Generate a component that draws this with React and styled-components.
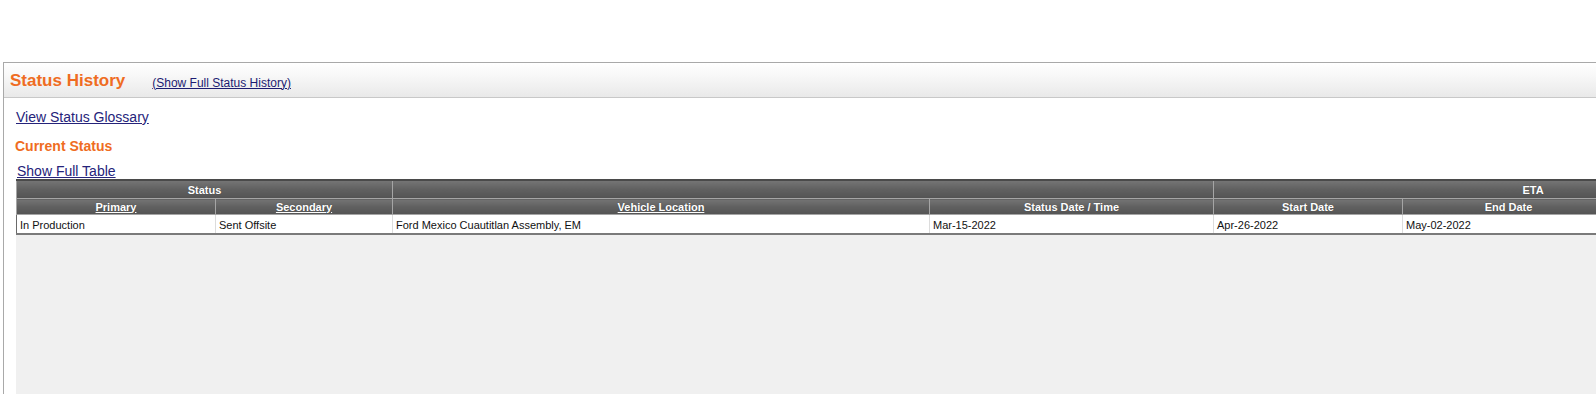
import React from "react";
import styled, { createGlobalStyle } from "styled-components";

const GlobalStyle = createGlobalStyle`
  html, body {
    margin: 0;
    padding: 0;
    background: #ffffff;
    overflow: hidden;
    font-family: Arial, "Liberation Sans", sans-serif;
  }
`;

const Page = styled.div`
  width: 1596px;
  height: 394px;
  overflow: hidden;
  padding-top: 62px;
  box-sizing: border-box;
`;

const Panel = styled.div`
  margin-left: 3px;
  width: 1900px;
  height: 340px;
  border: 1px solid #a9a9a9;
  background: #ffffff;
  display: flex;
  flex-direction: column;
`;

const PanelHeader = styled.div`
  height: 35px;
  box-sizing: border-box;
  padding: 2px 0 0 6px;
  display: flex;
  align-items: center;
  background: linear-gradient(to bottom, #ffffff 0%, #f7f7f7 40%, #e9e9e9 100%);
  border-bottom: 1px solid #c8c8c8;
`;

const Title = styled.span`
  color: #ef6c22;
  font-size: 17px;
  font-weight: bold;
`;

const HeaderLink = styled.a`
  margin-left: 27px;
  margin-top: 3px;
  color: #1c1c72;
  font-size: 12px;
  text-decoration: underline;
  cursor: pointer;
`;

const Body = styled.div`
  flex: 1;
  display: flex;
  flex-direction: column;
  padding-left: 12px;
`;

const TextLink = styled.a`
  display: block;
  color: #25237a;
  font-size: 14px;
  line-height: 16px;
  text-decoration: underline;
  margin-left: ${(p) => p.$indent || 0}px;
  cursor: pointer;
`;

const SectionTitle = styled.div`
  color: #ef6c22;
  font-size: 14px;
  font-weight: bold;
  line-height: 16px;
  margin-left: -1px;
`;

const TableArea = styled.div`
  flex: 1;
  background: #f0f0f0;
`;

const Table = styled.table`
  table-layout: fixed;
  border-collapse: collapse;
  width: 1836px;
  background: #ffffff;
  border-top: 2px solid #4a4a4a;
  border-bottom: 2px solid #7a7a7a;
  border-left: 1px solid #6a6a6a;
`;

const Th = styled.th`
  height: ${(p) => p.$h}px;
  padding: 0;
  background: linear-gradient(to bottom, #747474 0%, #606060 50%, #545454 100%);
  border: 1px solid #a5a5a5;
  border-top-color: ${(p) => (p.$first ? "#4a4a4a" : "#a5a5a5")};
  color: #ffffff;
  font-size: 11px;
  font-weight: bold;
  text-align: center;
  text-decoration: ${(p) => (p.$link ? "underline" : "none")};
  text-shadow: 0 0 1px rgba(0, 0, 0, 0.4);
  white-space: nowrap;
`;

const Td = styled.td`
  height: 17px;
  padding: 1px 0 0 3px;
  border-right: 1px solid #dcdcdc;
  color: #111111;
  font-size: 11px;
  white-space: nowrap;
  overflow: hidden;
`;

const widths = [199, 177, 537, 284, 189, 212, 238];

const row = {
  primary: "In Production",
  secondary: "Sent Offsite",
  location: "Ford Mexico Cuautitlan Assembly, EM",
  statusDate: "Mar-15-2022",
  start: "Apr-26-2022",
  end: "May-02-2022",
  extra: "",
};

const App = () => {
  return (
    <Page>
      <GlobalStyle />
      <Panel>
        <PanelHeader>
          <Title>Status History</Title>
          <HeaderLink>(Show Full Status History)</HeaderLink>
        </PanelHeader>
        <Body>
          <div style={{ height: 11 }} />
          <TextLink>View Status Glossary</TextLink>
          <div style={{ height: 13 }} />
          <SectionTitle>Current Status</SectionTitle>
          <div style={{ height: 9 }} />
          <TextLink $indent={1}>Show Full Table</TextLink>
          <TableArea>
            <Table>
              <colgroup>
                {widths.map((w, i) => (
                  <col key={i} style={{ width: w }} />
                ))}
              </colgroup>
              <thead>
                <tr>
                  <Th $h={17} $first colSpan={2}>Status</Th>
                  <Th $h={17} $first colSpan={2}></Th>
                  <Th $h={17} $first colSpan={3}>ETA</Th>
                </tr>
                <tr>
                  <Th $h={15} $link>Primary</Th>
                  <Th $h={15} $link>Secondary</Th>
                  <Th $h={15} $link>Vehicle Location</Th>
                  <Th $h={15}>Status Date / Time</Th>
                  <Th $h={15}>Start Date</Th>
                  <Th $h={15}>End Date</Th>
                  <Th $h={15}></Th>
                </tr>
              </thead>
              <tbody>
                <tr>
                  <Td>{row.primary}</Td>
                  <Td>{row.secondary}</Td>
                  <Td>{row.location}</Td>
                  <Td>{row.statusDate}</Td>
                  <Td>{row.start}</Td>
                  <Td>{row.end}</Td>
                  <Td>{row.extra}</Td>
                </tr>
              </tbody>
            </Table>
          </TableArea>
        </Body>
      </Panel>
    </Page>
  );
};

export default App;
